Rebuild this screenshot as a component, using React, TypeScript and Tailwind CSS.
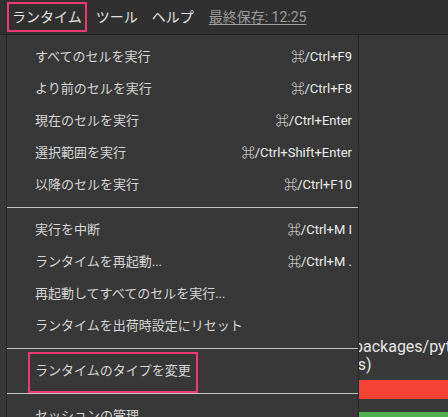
import React from 'react';

const groups = [
  [
    { label: 'すべてのセルを実行', shortcut: '⌘/Ctrl+F9' },
    { label: 'より前のセルを実行', shortcut: '⌘/Ctrl+F8' },
    { label: '現在のセルを実行', shortcut: '⌘/Ctrl+Enter' },
    { label: '選択範囲を実行', shortcut: '⌘/Ctrl+Shift+Enter' },
    { label: '以降のセルを実行', shortcut: '⌘/Ctrl+F10' },
  ],
  [
    { label: '実行を中断', shortcut: '⌘/Ctrl+M I' },
    { label: 'ランタイムを再起動...', shortcut: '⌘/Ctrl+M .' },
    { label: '再起動してすべてのセルを実行...', shortcut: '' },
    { label: 'ランタイムを出荷時設定にリセット', shortcut: '' },
  ],
  [{ label: 'ランタイムのタイプを変更', shortcut: '' }],
  [{ label: 'セッションの管理', shortcut: '' }],
];

export default function App() {
  return (
    <div className="relative w-[448px] h-[417px] overflow-hidden bg-[#383838] font-['Roboto','Noto_Sans_CJK_JP',sans-serif]">
      {/* Top menu bar */}
      <div className="flex items-center h-[35px] pl-[7px] bg-[#303030] border-b border-[#232323]">
        <div className="flex items-center h-[30px] px-[3px] border-2 border-[#ec3a72] text-[14px] text-[#e3e3e3]">
          ランタイム
        </div>
        <span className="ml-[9px] text-[14px] text-[#e3e3e3]">ツール</span>
        <span className="ml-[14px] text-[14px] text-[#e3e3e3]">ヘルプ</span>
        <span className="ml-[15px] text-[14px] text-[#9c9c9c] underline underline-offset-2">最終保存: 12:25</span>
      </div>

      {/* Page content behind the menu */}
      <div className="pt-[303px] pl-[354px] text-[16px] leading-[18px] text-[#e6e6e6] whitespace-nowrap">
        <div>packages/python3.10</div>
        <div className="-ml-[5px]">ns)</div>
        <div className="mt-[6px] h-[19px] bg-[#f44336]"></div>
        <div className="mt-[13px] h-[20px] bg-[#4caf50]"></div>
      </div>

      {/* Dropdown menu */}
      <div className="absolute left-[6px] top-[35px] w-[353px] h-[400px] bg-[#383838] border-l border-r border-[#262626] pt-[6px]">
        {groups.map((group, gi) => (
          <div key={gi}>
            {gi > 0 && (
              <div className="py-[6px]">
                <div className="h-px bg-[#c4c4c4]"></div>
              </div>
            )}
            {group.map((item) => (
              <div key={item.label} className="flex items-center justify-between h-[32px] pl-[28px] pr-[6px] text-[13px]">
                <span className="text-[#d6d6d6]">{item.label}</span>
                <span className="text-[#ececec]">{item.shortcut}</span>
              </div>
            ))}
          </div>
        ))}
      </div>

      {/* Highlight annotation */}
      <div className="absolute left-[28px] top-[352px] w-[170px] h-[41px] border-2 border-[#ec3a72]"></div>
    </div>
  );
}
